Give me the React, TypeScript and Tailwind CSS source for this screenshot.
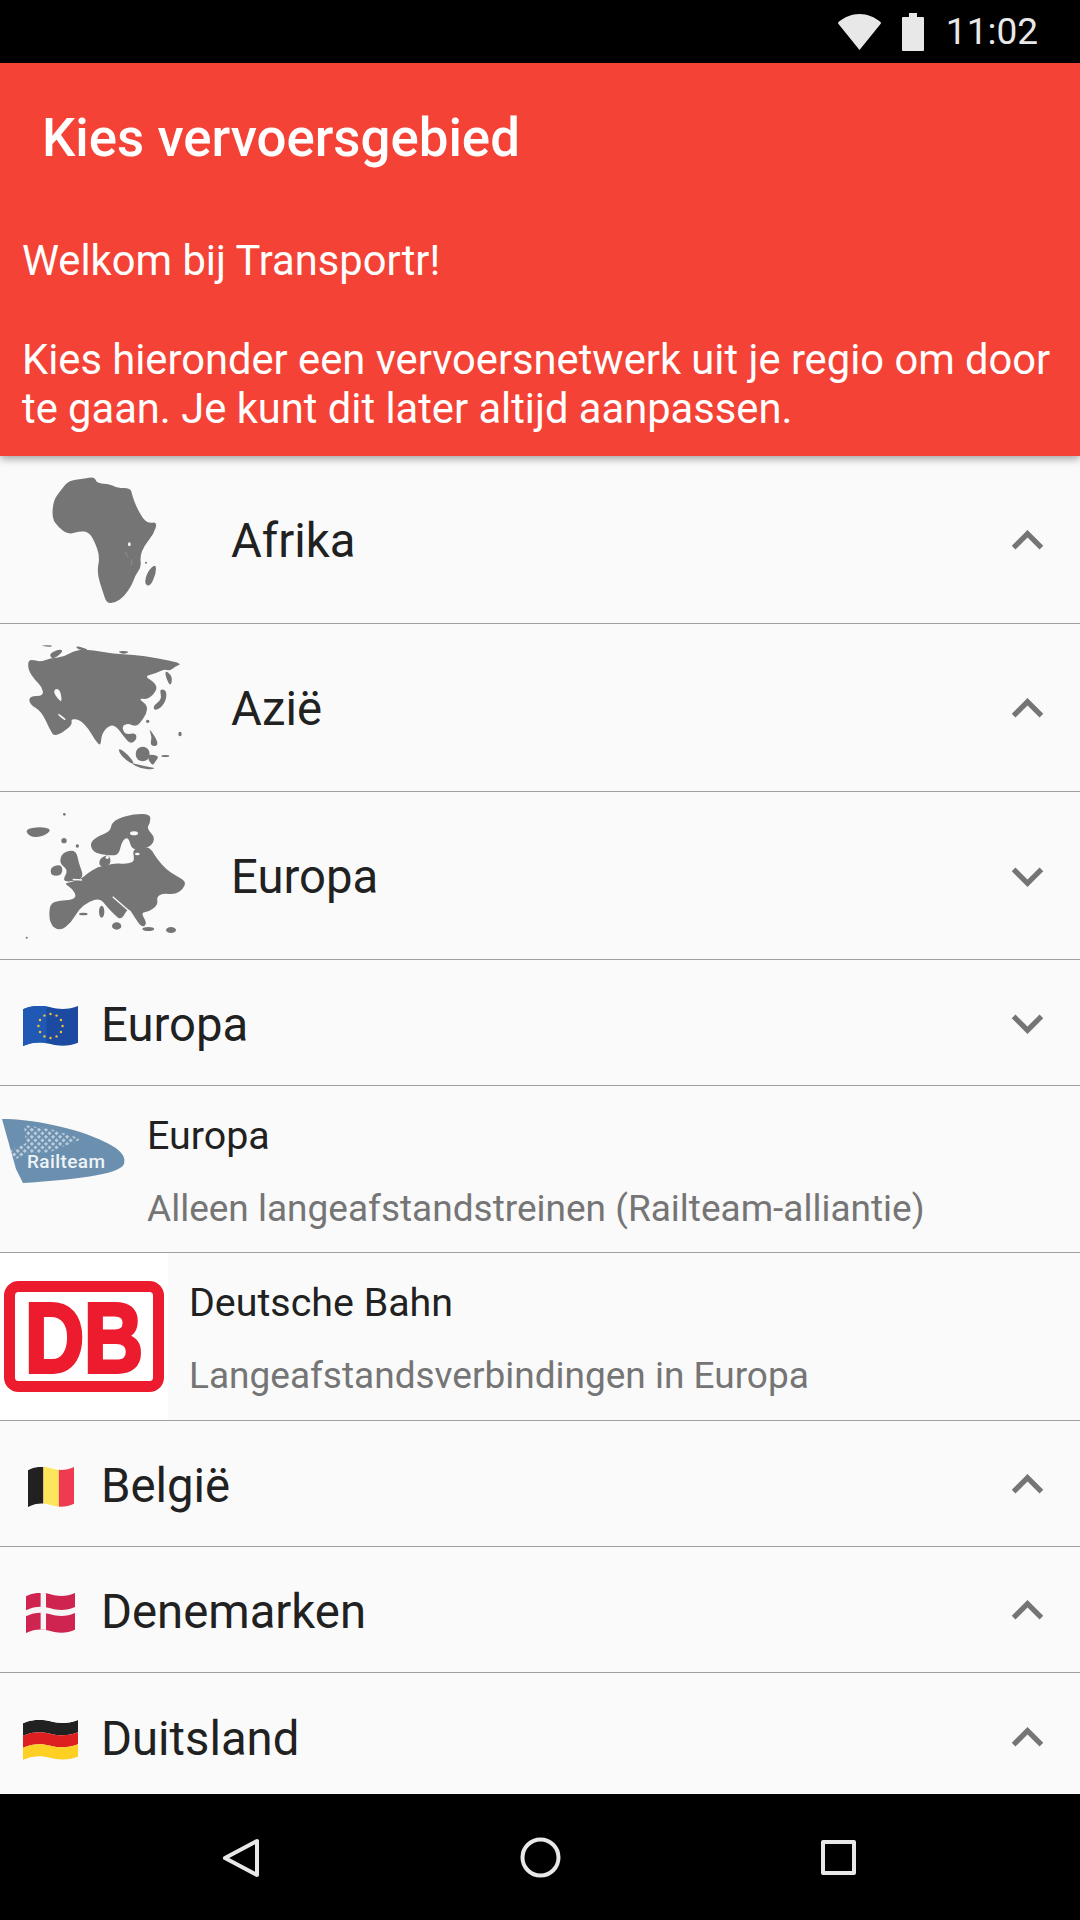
import React from 'react';

// rounds a traced outline so the coast does not look like a polygon
function smooth(pts: number[][]) {
  const mid = (a: number[], b: number[]) => [(a[0] + b[0]) / 2, (a[1] + b[1]) / 2];
  const start = mid(pts[pts.length - 1], pts[0]);
  let d = `M${start[0]} ${start[1]}`;
  pts.forEach((p, i) => {
    const m = mid(p, pts[(i + 1) % pts.length]);
    d += ` Q${p[0]} ${p[1]} ${m[0]} ${m[1]}`;
  });
  return d + ' Z';
}

function Chevron({ up }: { up?: boolean }) {
  return (
    <svg viewBox="0 0 24 24" className={`w-[63px] h-[63px] mt-[2px] shrink-0 fill-[#757575] ${up ? '' : 'rotate-180'}`}>
      <path d="M7.41 15.41L12 10.83l4.59 4.58L18 14l-6-6-6 6z" />
    </svg>
  );
}

const africa = [
  [205, 92], [250, 86], [284, 80], [290, 100], [330, 102], [352, 114], [392, 114], [396, 135], [410, 172], [428, 205], [445, 220], [472, 216],
  [462, 250], [432, 288], [420, 320], [424, 350], [405, 378], [396, 405], [372, 440], [345, 458], [320, 460], [310, 430], [290, 368], [300, 320],
  [282, 270], [265, 246], [240, 243], [205, 254], [175, 232], [156, 205], [160, 150], [185, 118],
];

function AfricaMap() {
  return (
    <svg viewBox="0 18 630 501" className="w-[210px] h-[167px] shrink-0 fill-[#757575]">
      <path d={smooth(africa)} />
      <path d={smooth([[468, 340], [468, 372], [450, 410], [433, 402], [442, 365]])} />
      <circle cx="438" cy="338" r="3" />
      <ellipse cx="388" cy="283" rx="4" ry="6" fill="#fafafa" />
      <circle cx="268" cy="270" r="4" fill="#fafafa" />
      <path d="M375 305 L385 322 M396 328 L394 345" stroke="#9a9a9a" strokeWidth="2" />
    </svg>
  );
}

const asia = [
  [85, 626], [120, 636], [150, 625], [190, 622], [230, 598], [280, 600], [340, 612], [400, 614], [470, 624], [548, 640], [525, 650], [510, 662],
  [490, 658], [470, 670], [432, 678], [465, 698], [472, 720], [445, 748], [414, 745], [442, 765], [440, 790], [420, 820], [405, 830], [385, 820],
  [365, 828], [375, 855], [408, 848], [410, 870], [390, 882], [372, 860], [350, 830], [330, 824], [305, 850], [302, 890], [285, 870], [265, 835],
  [240, 810], [212, 806], [218, 826], [165, 862], [150, 840], [125, 785], [88, 762], [88, 738], [132, 738], [125, 710], [105, 690], [84, 660],
];

function AsiaMap() {
  return (
    <svg viewBox="0 522 630 501" className="w-[210px] h-[167px] shrink-0 fill-[#757575]">
      <path d={smooth(asia)} />
      <path d={smooth([[170, 714], [182, 725], [186, 757], [172, 745], [160, 725]])} fill="#fafafa" />
      <path d={smooth([[172, 788], [198, 806], [195, 812], [176, 798]])} fill="#fafafa" />
      <path d={smooth([[495, 660], [518, 680], [512, 710], [498, 685]])} />
      <path d={smooth([[466, 784], [495, 762], [502, 722], [478, 716], [486, 748], [458, 768]])} />
      <path d={smooth([[445, 832], [472, 870], [472, 890], [450, 886], [456, 860]])} />
      <ellipse cx="428" cy="912" rx="21" ry="22" />
      <path d={smooth([[356, 893], [385, 915], [405, 942], [385, 937], [358, 910]])} />
      <path d={smooth([[385, 936], [430, 948], [474, 955], [430, 960]])} />
      <path d={smooth([[446, 912], [478, 918], [466, 934], [458, 948], [443, 926]])} />
      <path d={smooth([[116, 586], [160, 585], [150, 592]])} />
      <path d={smooth([[146, 612], [175, 598], [192, 602], [160, 630]])} />
      <path d={smooth([[225, 586], [272, 600], [235, 600]])} />
      <path d={smooth([[350, 602], [392, 604], [370, 614]])} />
      <ellipse cx="540" cy="852" rx="5" ry="7" />
      <ellipse cx="496" cy="918" rx="12" ry="3" />
      <circle cx="443" cy="814" r="5" />
      <circle cx="404" cy="831" r="4" fill="#fafafa" />
    </svg>
  );
}

const europe = [
  [148, 1360], [180, 1352], [215, 1350], [230, 1338], [215, 1315], [192, 1300], [215, 1296], [245, 1286], [262, 1270], [295, 1250], [320, 1246],
  [345, 1240], [385, 1242], [405, 1232], [396, 1196], [440, 1190], [455, 1200], [470, 1225], [500, 1260], [530, 1278], [558, 1295], [550, 1316], [525, 1334],
  [490, 1330], [470, 1340], [474, 1365], [445, 1386], [422, 1388], [442, 1420], [426, 1434], [400, 1396], [385, 1372], [364, 1410], [345, 1396], [322, 1372], [300, 1345],
  [265, 1355], [235, 1380], [215, 1416], [180, 1444], [148, 1422],
];

const scandinavia = [
  [270, 1180], [290, 1160], [330, 1145], [335, 1120], [355, 1105], [400, 1092], [452, 1092], [450, 1120], [440, 1135], [467, 1165], [450, 1192], [420, 1196],
  [395, 1198], [385, 1160], [366, 1172], [356, 1216], [330, 1216], [300, 1212], [278, 1204],
];

function EuropeMap() {
  return (
    <svg viewBox="0 1026 630 501" className="w-[210px] h-[167px] shrink-0 fill-[#757575]">
      <path d={smooth(europe)} />
      <path d={smooth(scandinavia)} />
      <path d={smooth([[298, 1225], [328, 1212], [334, 1245], [298, 1252]])} />
      <path d={smooth([[186, 1208], [228, 1198], [236, 1240], [254, 1286], [205, 1296], [188, 1290], [205, 1260], [178, 1240]])} />
      <path d={smooth([[152, 1250], [187, 1243], [187, 1277], [152, 1277]])} />
      <path d={smooth([[74, 1138], [120, 1130], [157, 1138], [130, 1160], [90, 1162]])} />
      <circle cx="192" cy="1172" r="8" />
      <circle cx="232" cy="1188" r="5" />
      <circle cx="193" cy="1093" r="4" />
      <ellipse cx="305" cy="1385" rx="8" ry="18" />
      <ellipse cx="350" cy="1428" rx="14" ry="11" />
      <ellipse cx="250" cy="1392" rx="13" ry="4" />
      <ellipse cx="445" cy="1437" rx="18" ry="6" />
      <ellipse cx="513" cy="1440" rx="15" ry="9" />
      <circle cx="80" cy="1463" r="3" />
      <path d={smooth([[360, 1236], [375, 1205], [395, 1208], [390, 1240]])} fill="#fafafa" />
      <ellipse cx="402" cy="1150" rx="12" ry="6" fill="#fafafa" />
      <circle cx="322" cy="1222" r="5" fill="#fafafa" />
      <ellipse cx="412" cy="1212" rx="7" ry="4" fill="#fafafa" />
      <path d="M338 1340 L390 1385" stroke="#fafafa" strokeWidth="4" fill="none" />
      <path d="M218 1288 L246 1290" stroke="#fafafa" strokeWidth="4" fill="none" />
    </svg>
  );
}

// one horizontal stripe that follows the flag's wave, t1 and t2 run from 0 to 110
function band(t1: number, t2: number) {
  const edge = (t: number) => `C30 ${t - 4} 60 ${t - 2} 82 ${t + 4} C110 ${t + 12} 140 ${t + 10} 164 ${t}`;
  const back = (t: number) => `C140 ${t + 10} 110 ${t + 12} 82 ${t + 4} C60 ${t - 2} 30 ${t - 4} 0 ${t + 10}`;
  return `M0 ${t1 + 10} ${edge(t1)} L164 ${t2} ${back(t2)} Z`;
}

function Flag({ id, w, children }: { id: string; w: string; children: React.ReactNode }) {
  return (
    <div className="w-[101px] shrink-0 flex justify-center mt-[7px]">
      <svg viewBox="0 0 164 120" preserveAspectRatio="none" className={`${w} h-[40px]`}>
        <clipPath id={id}>
          <path d={band(0, 110)} />
        </clipPath>
        <g clipPath={`url(#${id})`}>{children}</g>
      </svg>
    </div>
  );
}

function EuFlag() {
  const stars = Array.from({ length: 12 }, (_, i) => {
    const a = (i * Math.PI) / 6;
    return { x: 82 + 36 * Math.sin(a), y: 60 - 36 * Math.cos(a) };
  });
  return (
    <Flag id="eu" w="w-[55px]">
      <rect width="164" height="120" fill="#1c4aa0" />
      <rect width="70" height="120" fill="#2059b4" />
      {stars.map((s, i) => (
        <circle key={i} cx={s.x} cy={s.y} r="3.6" fill="#f4c430" />
      ))}
    </Flag>
  );
}

function BelgiumFlag() {
  return (
    <Flag id="be" w="w-[46px]">
      <rect width="55" height="120" fill="#212121" />
      <rect x="55" width="55" height="120" fill="#fde55c" />
      <rect x="110" width="54" height="120" fill="#ef3b50" />
    </Flag>
  );
}

function DenmarkFlag() {
  return (
    <Flag id="dk" w="w-[49px]">
      <rect width="164" height="120" fill="#cf2450" />
      <rect x="49" width="18" height="120" fill="#f5f5f5" />
      <path d={band(42, 60)} fill="#f5f5f5" />
    </Flag>
  );
}

function GermanyFlag() {
  return (
    <Flag id="de" w="w-[55px]">
      <path d={band(0, 37)} fill="#212121" />
      <path d={band(37, 73)} fill="#dd1f1f" />
      <path d={band(73, 110)} fill="#fdd023" />
    </Flag>
  );
}

function RailteamLogo() {
  return (
    <svg viewBox="0 0 126 68" className="w-[126px] h-[68px]">
      <defs>
        <pattern id="dots" width="5" height="5" patternUnits="userSpaceOnUse" patternTransform="rotate(45)">
          <rect width="3" height="3" fill="#d5dfe8" />
        </pattern>
      </defs>
      <path d="M2 2 C30 2 75 10 105 25 C122 33 126 40 124 47 C120 58 70 63 23 66 L16 52 Z" fill="#6b8fae" />
      <path d="M24 8 L50 12 L82 22 L62 30 L48 36 L28 36 L12 44 L10 34 L26 26 Z" fill="url(#dots)" opacity="0.75" />
      <text x="66" y="51" textAnchor="middle" fill="#eef3f7" fontSize="19" fontWeight="500" fontFamily="Roboto, sans-serif" textLength="78" lengthAdjust="spacing">
        Railteam
      </text>
    </svg>
  );
}

function DbLogo() {
  return (
    <div className="w-[168px] h-[167px] shrink-0 bg-white flex items-center justify-center">
      <svg viewBox="0 0 160 111" className="w-[160px] h-[111px]">
        <rect x="5.5" y="5.5" width="149" height="100" rx="9" fill="#fff" stroke="#ec1c2e" strokeWidth="11" />
        <text x="21" y="91" fill="#ec1c2e" stroke="#ec1c2e" strokeWidth="4" fontSize="98" fontWeight="700" fontFamily="'Liberation Sans', sans-serif" textLength="118" lengthAdjust="spacingAndGlyphs">
          DB
        </text>
      </svg>
    </div>
  );
}

function RegionRow({ map, name, up }: { map: React.ReactNode; name: string; up?: boolean }) {
  return (
    <div className="h-[168px] shrink-0 flex items-center border-b border-[#a0a0a0] pr-[21px]">
      {map}
      <span className="ml-[21px] mt-[3px] flex-1 text-[47.25px] text-[#212121]">{name}</span>
      <Chevron up={up} />
    </div>
  );
}

function CountryRow({ flag, name, up, last }: { flag: React.ReactNode; name: string; up?: boolean; last?: boolean }) {
  return (
    <div className={`h-[126px] shrink-0 flex items-center pr-[21px] ${last ? '' : 'border-b border-[#a0a0a0]'}`}>
      {flag}
      <span className="flex-1 mt-[6px] text-[47.25px] text-[#212121]">{name}</span>
      <Chevron up={up} />
    </div>
  );
}

function NetworkRow({ logo, title, sub, height }: { logo: React.ReactNode; title: string; sub: string; height: string }) {
  return (
    <div className={`${height} shrink-0 flex border-b border-[#a0a0a0]`}>
      {logo}
      <div className="flex flex-col pt-[25px]">
        <span className="text-[39.4px] leading-[50px] text-[#212121]">{title}</span>
        <span className="mt-[23px] text-[37px] leading-[50px] text-[#757575]">{sub}</span>
      </div>
    </div>
  );
}

export default function App() {
  return (
    <div className="w-[1080px] h-[1920px] flex flex-col overflow-hidden bg-[#fafafa] font-[Roboto,sans-serif]">
      {/* Status bar */}
      <div className="h-[63px] shrink-0 bg-black flex items-center justify-end pr-[42px] text-[#e8e8e8]">
        <svg viewBox="0 0 44 36" className="w-[45px] h-[36px] mr-[20px] fill-[#e8e8e8]">
          <path d="M22 36 L1 10 Q0 9 1 8 C7 3 14 0 22 0 C30 0 37 3 43 8 Q44 9 43 10 Z" />
        </svg>
        <svg viewBox="0 0 22 38" className="w-[22px] h-[38px] mr-[22px] fill-[#e8e8e8]">
          <path d="M1 4 H7 V0 H15 V4 H21 Q22 4 22 5 V37 Q22 38 21 38 H1 Q0 38 0 37 V5 Q0 4 1 4 Z" />
        </svg>
        <span className="text-[37px] leading-none">11:02</span>
      </div>

      {/* Header */}
      <div className="h-[393px] shrink-0 bg-[#f44336] text-white relative z-10 shadow-[0_3px_8px_rgba(0,0,0,0.35)]">
        <h1 className="pl-[42px] pt-[43px] text-[52.8px] leading-[64px] font-medium">Kies vervoersgebied</h1>
        <p className="pl-[22px] pr-[20px] pt-[66px] text-[41.7px] leading-[49.3px]">
          Welkom bij Transportr!
          <br />
          <br />
          Kies hieronder een vervoersnetwerk uit je regio om door te gaan. Je kunt dit later altijd aanpassen.
        </p>
      </div>

      {/* List */}
      <div className="flex-1 min-h-0 overflow-hidden flex flex-col">
        <RegionRow map={<AfricaMap />} name="Afrika" up />
        <RegionRow map={<AsiaMap />} name="Azië" up />
        <RegionRow map={<EuropeMap />} name="Europa" />
        <CountryRow flag={<EuFlag />} name="Europa" />
        <NetworkRow
          height="h-[167px]"
          logo={
            <div className="w-[147px] shrink-0 pt-[31px]">
              <RailteamLogo />
            </div>
          }
          title="Europa"
          sub="Alleen langeafstandstreinen (Railteam-alliantie)"
        />
        <NetworkRow
          height="h-[168px]"
          logo={
            <div className="shrink-0 mr-[21px]">
              <DbLogo />
            </div>
          }
          title="Deutsche Bahn"
          sub="Langeafstandsverbindingen in Europa"
        />
        <CountryRow flag={<BelgiumFlag />} name="België" up />
        <CountryRow flag={<DenmarkFlag />} name="Denemarken" up />
        <CountryRow flag={<GermanyFlag />} name="Duitsland" up last />
      </div>

      {/* Navigation bar */}
      <div className="h-[126px] shrink-0 bg-black flex items-center justify-between px-[210px]">
        <svg viewBox="0 0 63 63" className="w-[63px] h-[63px] fill-none stroke-[#e8e8e8] stroke-[4] [stroke-linejoin:round]">
          <path d="M47 15 V49 L15 32 Z" />
        </svg>
        <svg viewBox="0 0 63 63" className="w-[63px] h-[63px] fill-none stroke-[#e8e8e8] stroke-[4]">
          <circle cx="31.5" cy="31.5" r="18" />
        </svg>
        <svg viewBox="0 0 63 63" className="w-[63px] h-[63px] fill-none stroke-[#e8e8e8] stroke-[4] [stroke-linejoin:round]">
          <rect x="16" y="16" width="31" height="31" />
        </svg>
      </div>
    </div>
  );
}
